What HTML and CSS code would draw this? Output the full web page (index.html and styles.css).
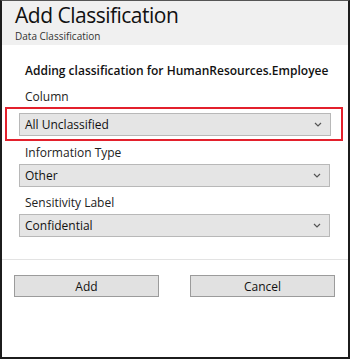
FILE: index.html
```html
<!DOCTYPE html>
<html lang="en">
<head>
    <meta charset="UTF-8">
    <title>Add Classification</title>
    <link rel="stylesheet" href="styles.css">
</head>
<body>
    <div class="dialog">
        <!-- Header -->
        <div class="header">
            <div class="title">Add Classification</div>
            <div class="subtitle">Data Classification</div>
        </div>

        <!-- Form -->
        <div class="form">
            <div class="heading">Adding classification for HumanResources.Employee</div>

            <div class="label first">Column</div>
            <div class="highlight">
                <div class="select">
                    <span>All Unclassified</span>
                    <svg class="chevron" width="8" height="5" viewBox="0 0 8 5"><path d="M1 1 L4 4 L7 1" fill="none" stroke="#555" stroke-width="1.2"/></svg>
                </div>
            </div>

            <div class="label">Information Type</div>
            <div class="select field">
                <span>Other</span>
                <svg class="chevron" width="8" height="5" viewBox="0 0 8 5"><path d="M1 1 L4 4 L7 1" fill="none" stroke="#555" stroke-width="1.2"/></svg>
            </div>

            <div class="label spaced">Sensitivity Label</div>
            <div class="select field">
                <span>Confidential</span>
                <svg class="chevron" width="8" height="5" viewBox="0 0 8 5"><path d="M1 1 L4 4 L7 1" fill="none" stroke="#555" stroke-width="1.2"/></svg>
            </div>
        </div>

        <!-- Buttons -->
        <div class="footer">
            <button class="btn">Add</button>
            <button class="btn">Cancel</button>
        </div>
    </div>
</body>
</html>
```

FILE: styles.css
```css
body {
    margin: 0;
    padding: 0;
    font-family: "Open Sans", "Noto Sans", sans-serif;
    color: #1a1a1a;
    background-color: #fff;
}

.dialog {
    box-sizing: border-box;
    width: 350px;
    height: 359px;
    border: 2px solid #1c1c1c;
    border-top: 1px solid #555;
    background-color: #fff;
}

/* Header */
.header {
    height: 44px;
    background-color: #f0f0f0;
    padding: 0 13px;
    box-sizing: border-box;
}

.title {
    font-size: 21px;
    line-height: 29px;
    letter-spacing: -0.5px;
    color: #111;
}

.subtitle {
    font-size: 10px;
    line-height: 12px;
    color: #333;
}

/* Form */
.form {
    box-sizing: border-box;
    padding-top: 18px;
    height: 215px;
    border-bottom: 1px solid #e3e3e3;
}

.heading {
    font-size: 12px;
    font-weight: 600;
    line-height: 16px;
    padding-left: 23px;
    color: #111;
}

.label {
    font-size: 12px;
    line-height: 16px;
    padding-left: 23px;
    margin-top: 4px;
    color: #222;
}

.label.first {
    margin-top: 10px;
}

.label.spaced {
    margin-top: 8px;
}

.highlight {
    margin: 2px 5px 0 3px;
    border: 2px solid #e3202c;
    padding: 4px 10px 3px 12px;
}

.select {
    box-sizing: border-box;
    height: 23px;
    background-color: #e5e5e5;
    border: 1px solid #b8b8b8;
    display: flex;
    align-items: center;
    justify-content: space-between;
    padding: 0 6px 0 5px;
    font-size: 12px;
    color: #111;
}

.field {
    margin: 3px 18px 0 17px;
}

.chevron {
    margin-right: 2px;
}

/* Footer */
.footer {
    display: flex;
    gap: 31px;
    padding: 15px 0 0 12px;
}

.btn {
    width: 145px;
    height: 22px;
    background-color: #e1e1e1;
    border: 1px solid #9b9b9b;
    font-family: "Open Sans", "Noto Sans", sans-serif;
    font-size: 12px;
    color: #111;
    padding: 0;
}
```
